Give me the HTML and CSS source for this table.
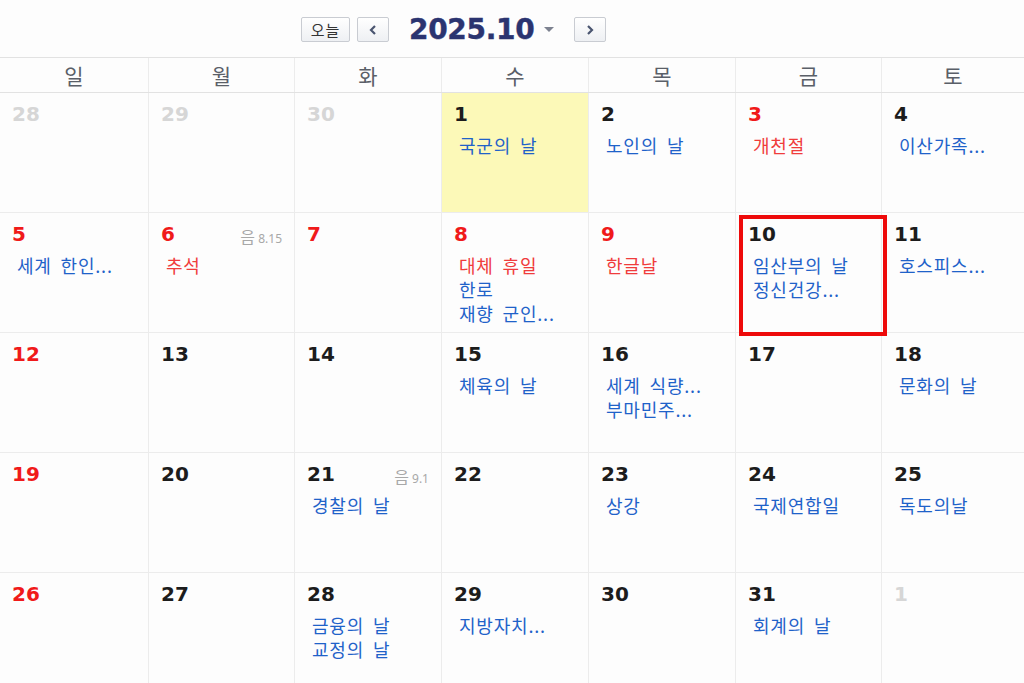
FILE: index.html
```html
<!DOCTYPE html>
<html lang="ko">
<head>
<meta charset="utf-8">
<link rel="stylesheet" href="styles.css">
</head>
<body>
<div class="page">
  <div class="topbar">
    <button class="btn today">오늘</button>
    <button class="btn arrow"><svg width="10" height="12" viewBox="0 0 10 12"><path d="M7 2 L3 6 L7 10" fill="none" stroke="#4a5570" stroke-width="2.2"/></svg></button>
    <div class="title">2025.10</div>
    <svg class="caret" width="12" height="8" viewBox="0 0 12 8"><path d="M1 1 L11 1 L6 6 Z" fill="#7d8290"/></svg>
    <button class="btn arrow"><svg width="10" height="12" viewBox="0 0 10 12"><path d="M3 2 L7 6 L3 10" fill="none" stroke="#4a5570" stroke-width="2.2"/></svg></button>
  </div>
  <div class="weekdays">
    <div>일</div><div>월</div><div>화</div><div>수</div><div>목</div><div>금</div><div>토</div>
  </div>
  <div class="grid">
    <div class="cell"><div class="num other">28</div></div>
    <div class="cell"><div class="num other">29</div></div>
    <div class="cell"><div class="num other">30</div></div>
    <div class="cell today-cell"><div class="num">1</div><div class="ev">국군의 날</div></div>
    <div class="cell"><div class="num">2</div><div class="ev">노인의 날</div></div>
    <div class="cell"><div class="num red">3</div><div class="ev hol">개천절</div></div>
    <div class="cell"><div class="num">4</div><div class="ev">이산가족...</div></div>

    <div class="cell"><div class="num red">5</div><div class="ev">세계 한인...</div></div>
    <div class="cell"><div class="head"><div class="num red">6</div><div class="lunar"><span class="lk">음</span> 8.15</div></div><div class="ev hol">추석</div></div>
    <div class="cell"><div class="num red">7</div></div>
    <div class="cell"><div class="num red">8</div><div class="ev hol">대체 휴일</div><div class="ev">한로</div><div class="ev">재향 군인...</div></div>
    <div class="cell"><div class="num red">9</div><div class="ev hol">한글날</div></div>
    <div class="cell sel"><div class="num">10</div><div class="ev">임산부의 날</div><div class="ev">정신건강...</div><div class="selbox"></div></div>
    <div class="cell"><div class="num">11</div><div class="ev">호스피스...</div></div>

    <div class="cell"><div class="num red">12</div></div>
    <div class="cell"><div class="num">13</div></div>
    <div class="cell"><div class="num">14</div></div>
    <div class="cell"><div class="num">15</div><div class="ev">체육의 날</div></div>
    <div class="cell"><div class="num">16</div><div class="ev">세계 식량...</div><div class="ev">부마민주...</div></div>
    <div class="cell"><div class="num">17</div></div>
    <div class="cell"><div class="num">18</div><div class="ev">문화의 날</div></div>

    <div class="cell"><div class="num red">19</div></div>
    <div class="cell"><div class="num">20</div></div>
    <div class="cell"><div class="head"><div class="num">21</div><div class="lunar"><span class="lk">음</span> 9.1</div></div><div class="ev">경찰의 날</div></div>
    <div class="cell"><div class="num">22</div></div>
    <div class="cell"><div class="num">23</div><div class="ev">상강</div></div>
    <div class="cell"><div class="num">24</div><div class="ev">국제연합일</div></div>
    <div class="cell"><div class="num">25</div><div class="ev">독도의날</div></div>

    <div class="cell"><div class="num red">26</div></div>
    <div class="cell"><div class="num">27</div></div>
    <div class="cell"><div class="num">28</div><div class="ev">금융의 날</div><div class="ev">교정의 날</div></div>
    <div class="cell"><div class="num">29</div><div class="ev">지방자치...</div></div>
    <div class="cell"><div class="num">30</div></div>
    <div class="cell"><div class="num">31</div><div class="ev">회계의 날</div></div>
    <div class="cell"><div class="num other">1</div></div>
  </div>
</div>
</body>
</html>
```
FILE: styles.css
```css
* { box-sizing: border-box; }
html, body { margin: 0; padding: 0; }
body {
  background: #fdfdfd;
  font-family: "Noto Sans CJK KR", "Noto Sans", sans-serif;
  width: 1024px;
  height: 683px;
  overflow: hidden;
}
.page { width: 1024px; }
.topbar {
  height: 57px;
  display: flex;
  align-items: center;
  padding-left: 301px;
  padding-top: 2px;
}
.btn {
  height: 25px;
  border: 1px solid #c9ccd2;
  background: linear-gradient(#ffffff, #eef0f3);
  border-radius: 2px;
  display: flex;
  align-items: center;
  justify-content: center;
  padding: 0;
  font-family: "Noto Sans CJK KR", sans-serif;
}
.today { width: 49px; font-size: 15px; color: #333; margin-right: 7px; letter-spacing: 1px; }
.arrow { width: 32px; }
.title {
  font-family: "DejaVu Sans", sans-serif;
  font-weight: bold;
  font-size: 28px;
  color: #2b3470;
  margin-left: 20px;
  letter-spacing: -0.3px;
  -webkit-text-stroke: 0.4px #2b3470;
}
.caret { margin-left: 9px; margin-right: 19px; }
.weekdays {
  display: grid;
  grid-template-columns: 148px 146px 147px 147px 147px 146px 1fr;
  height: 36px;
  border-top: 1px solid #e2e2e2;
  border-bottom: 1px solid #e2e2e2;
}
.weekdays div {
  display: flex;
  align-items: center;
  justify-content: center;
  font-size: 21px;
  color: #5a5f68;
  border-left: 1px solid #ececec;
}
.weekdays div:first-child { border-left: none; }
.grid {
  display: grid;
  grid-template-columns: 148px 146px 147px 147px 147px 146px 1fr;
  grid-auto-rows: 120px;
}
.cell {
  position: relative;
  border-left: 1px solid #ececec;
  border-bottom: 1px solid #ececec;
  padding: 8px 12px 0 12px;
}
.cell:nth-child(7n+1) { border-left: none; }
.today-cell { background: #fcf9b8; }
.head { display: flex; justify-content: space-between; align-items: flex-start; }
.num {
  font-family: "DejaVu Sans", sans-serif;
  font-weight: bold;
  font-size: 20px;
  line-height: 26px;
  color: #1c1c1c;
  height: 32px;
}
.num.red { color: #f01a1a; }
.num.other { color: #d6d6d6; }
.lunar {
  font-family: "Noto Sans", sans-serif;
  font-size: 12px;
  color: #a8a8a8;
  padding-top: 3px;
  margin-right: 0;
}
.lunar .lk { font-family: "Noto Sans CJK KR", sans-serif; font-size: 16px; }
.ev {
  font-size: 18px;
  line-height: 24px;
  color: #1f62c9;
  padding-left: 5px;
  white-space: nowrap;
  letter-spacing: 0.8px;
  word-spacing: 3px;
}
.ev.hol { color: #f03c3c; }
.selbox {
  position: absolute;
  z-index: 5;
  left: 3px;
  top: 2px;
  width: 148px;
  height: 121px;
  border: 4px solid #ee0a0a;
  pointer-events: none;
}
```
